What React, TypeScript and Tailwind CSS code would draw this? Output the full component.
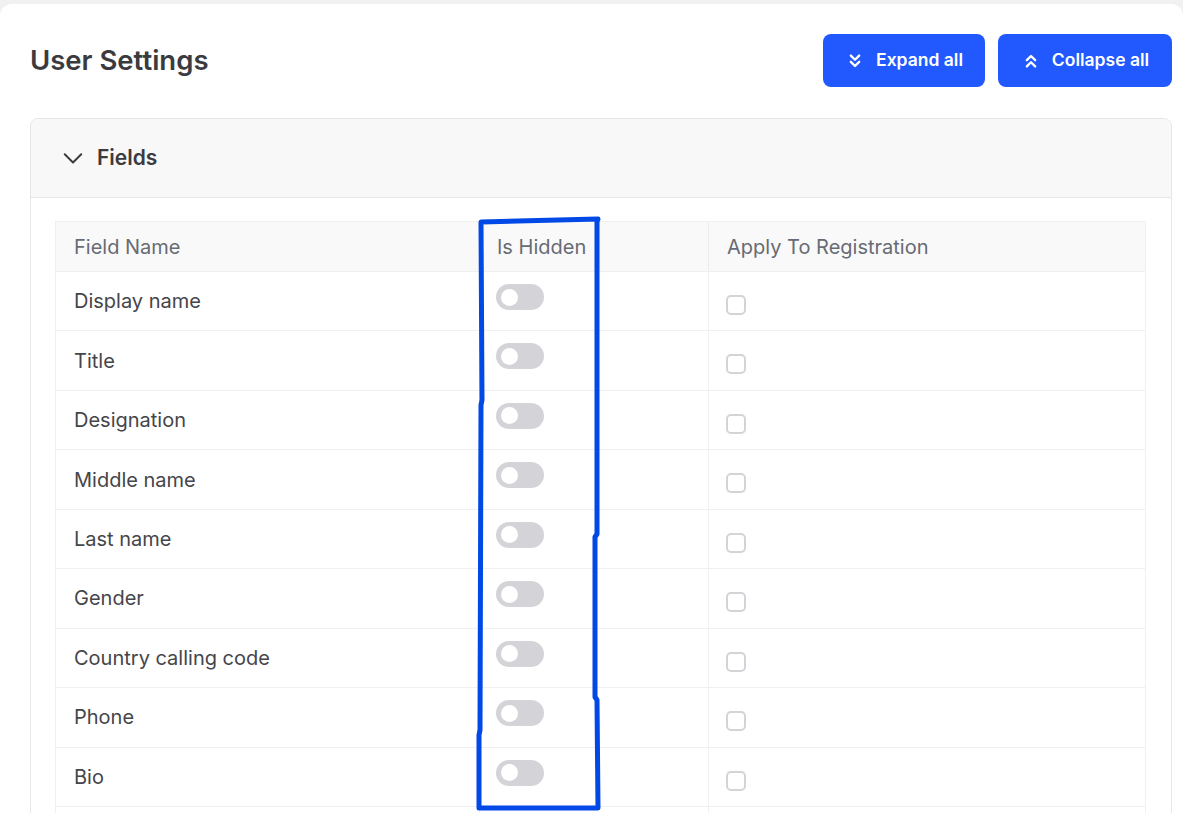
import React from "react";

const rows = [
  "Display name",
  "Title",
  "Designation",
  "Middle name",
  "Last name",
  "Gender",
  "Country calling code",
  "Phone",
  "Bio",
  "",
];

function ChevronsDown() {
  return (
    <svg width="20" height="20" viewBox="0 0 24 24" fill="none" stroke="currentColor" strokeWidth="2.8" strokeLinecap="round" strokeLinejoin="round">
      <path d="m7 5.5 5 5 5-5" />
      <path d="m7 13 5 5 5-5" />
    </svg>
  );
}

function ChevronsUp() {
  return (
    <svg width="20" height="20" viewBox="0 0 24 24" fill="none" stroke="currentColor" strokeWidth="2.8" strokeLinecap="round" strokeLinejoin="round">
      <path d="m17 11-5-5-5 5" />
      <path d="m17 18.5-5-5-5 5" />
    </svg>
  );
}

function ChevronDown() {
  return (
    <svg width="22" height="22" viewBox="0 0 24 24" fill="none" stroke="currentColor" strokeWidth="2.2" strokeLinecap="round" strokeLinejoin="round">
      <path d="m3 8 9 9 9-9" />
    </svg>
  );
}

export default function App() {
  return (
    <div
      className="relative min-h-screen bg-[#f1f1f1] pt-[4px] overflow-hidden"
      style={{ fontFamily: "Inter, 'Noto Sans', sans-serif" }}
    >
      <div className="bg-white rounded-tl-[12px] rounded-tr-[12px] pl-[30px] pr-[11px] pt-[30px] min-h-[809px]">
        <div className="flex items-center justify-between">
          <h1 className="text-[27.5px] font-semibold text-[#3b3b3f] leading-none">
            User Settings
          </h1>
          <div className="flex gap-[13px]">
            <button className="h-[53px] w-[162px] rounded-[8px] bg-[#2159ff] text-white flex items-center justify-center gap-[11px] text-[17.5px] font-semibold">
              <ChevronsDown />
              <span>Expand all</span>
            </button>
            <button className="h-[53px] w-[174px] rounded-[8px] bg-[#2159ff] text-white flex items-center justify-center gap-[11px] text-[17.5px] font-semibold">
              <ChevronsUp />
              <span>Collapse all</span>
            </button>
          </div>
        </div>

        <div className="mt-[31px] border border-[#e6e6e6] rounded-[8px] overflow-hidden">
          <div className="h-[79px] bg-[#f8f8f8] border-b border-[#e6e6e6] flex items-center pl-[31px] gap-[13px] text-[#3b3b3f]">
            <ChevronDown />
            <span className="text-[21px] font-semibold">Fields</span>
          </div>
          <div className="pt-[23px] pl-[24px] pr-[25px] pb-[24px]">
            <div className="border-l border-r border-[#f0f0f0]">
              <div className="grid grid-cols-[423px_229px_1fr] h-[50px] bg-[#f9f9f9] border-t border-[#f0f0f0] text-[20px] text-[#676b74]">
                <div className="flex items-center pl-[18px]">Field Name</div>
                <div className="flex items-center pl-[17px] border-l border-[#ececec]">Is Hidden</div>
                <div className="flex items-center pl-[18px] border-l border-[#ececec]">Apply To Registration</div>
              </div>
              {rows.map((r, i) => (
                <div
                  key={i}
                  className="grid grid-cols-[423px_229px_1fr] h-[59.45px] border-t border-[#f0f0f0] text-[20px] text-[#45454a]"
                >
                  <div className="flex items-center pl-[18px]">{r}</div>
                  <div className="pl-[16px] pt-[12px] border-l border-[#f0f0f0]">
                    <div className="w-[48px] h-[26px] rounded-full bg-[#d4d4d8] flex items-center pl-[5px]">
                      <div className="w-[17px] h-[17px] rounded-full bg-white" />
                    </div>
                  </div>
                  <div className="pl-[17px] pt-[23px] border-l border-[#f0f0f0]">
                    <div className="w-[20px] h-[20px] rounded-[5px] border-2 border-[#d4d4d8] bg-white" />
                  </div>
                </div>
              ))}
            </div>
          </div>
        </div>
      </div>

      <svg
        className="absolute left-0 top-0 pointer-events-none"
        width="1183"
        height="813"
        viewBox="0 0 1183 813"
      >
        <polyline
          points="481,222 598,219 597,222 597,534 595,537 595,697 597,700 598,808 479,808 479,735 480,730 481,405 482,400 481,222"
          fill="none"
          stroke="#0049e6"
          strokeWidth="5"
          strokeLinejoin="round"
          strokeLinecap="round"
        />
      </svg>
    </div>
  );
}
